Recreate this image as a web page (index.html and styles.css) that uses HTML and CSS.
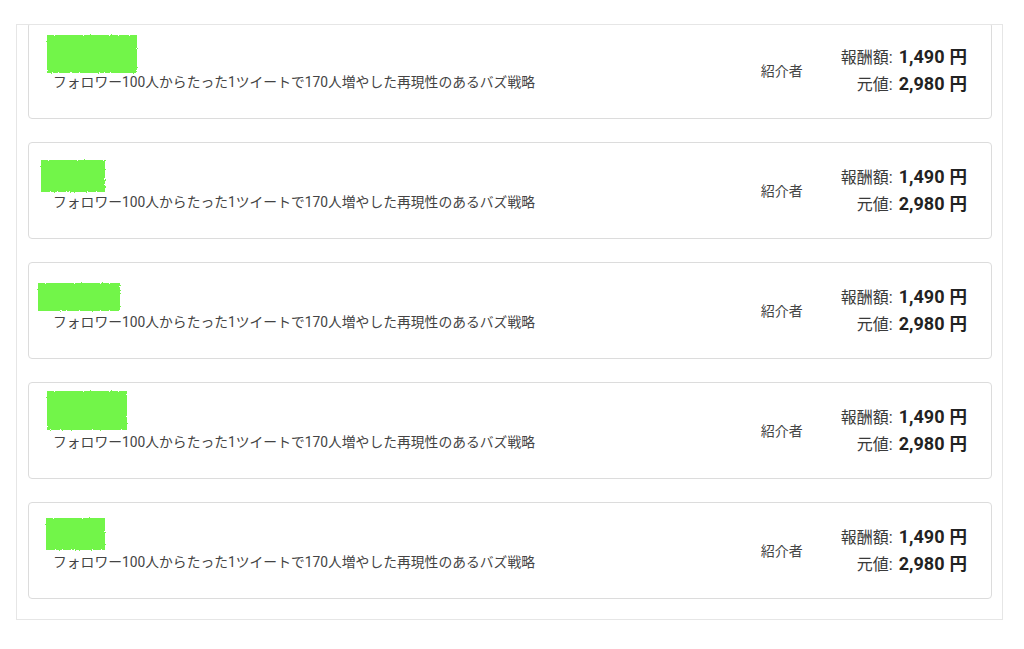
FILE: index.html
```html
<!DOCTYPE html>
<html lang="ja">
<head>
<meta charset="utf-8">
<title>紹介一覧</title>
<link rel="stylesheet" href="styles.css">
</head>
<body>
<svg class="defs" width="0" height="0" aria-hidden="true">
  <filter id="rough" x="-10%" y="-10%" width="120%" height="120%">
    <feTurbulence type="fractalNoise" baseFrequency="0.9" numOctaves="2" seed="3" result="n"/>
    <feDisplacementMap in="SourceGraphic" in2="n" scale="3" xChannelSelector="R" yChannelSelector="G"/>
  </filter>
</svg>
<div class="list">
  <div class="card">
    <span class="blob blob-1"></span>
    <div class="info">
      <div class="name"></div>
      <p class="desc">フォロワー100人からたった1ツイートで170人増やした再現性のあるバズ戦略</p>
    </div>
    <div class="referrer">紹介者</div>
    <div class="prices">
      <div class="row"><span class="label">報酬額:</span> <b class="num">1,490</b> <b class="yen">円</b></div>
      <div class="row"><span class="label">元値:</span> <b class="num">2,980</b> <b class="yen">円</b></div>
    </div>
  </div>
  <div class="card">
    <span class="blob blob-2"></span>
    <div class="info">
      <div class="name"></div>
      <p class="desc">フォロワー100人からたった1ツイートで170人増やした再現性のあるバズ戦略</p>
    </div>
    <div class="referrer">紹介者</div>
    <div class="prices">
      <div class="row"><span class="label">報酬額:</span> <b class="num">1,490</b> <b class="yen">円</b></div>
      <div class="row"><span class="label">元値:</span> <b class="num">2,980</b> <b class="yen">円</b></div>
    </div>
  </div>
  <div class="card">
    <span class="blob blob-3"></span>
    <div class="info">
      <div class="name"></div>
      <p class="desc">フォロワー100人からたった1ツイートで170人増やした再現性のあるバズ戦略</p>
    </div>
    <div class="referrer">紹介者</div>
    <div class="prices">
      <div class="row"><span class="label">報酬額:</span> <b class="num">1,490</b> <b class="yen">円</b></div>
      <div class="row"><span class="label">元値:</span> <b class="num">2,980</b> <b class="yen">円</b></div>
    </div>
  </div>
  <div class="card">
    <span class="blob blob-4"></span>
    <div class="info">
      <div class="name"></div>
      <p class="desc">フォロワー100人からたった1ツイートで170人増やした再現性のあるバズ戦略</p>
    </div>
    <div class="referrer">紹介者</div>
    <div class="prices">
      <div class="row"><span class="label">報酬額:</span> <b class="num">1,490</b> <b class="yen">円</b></div>
      <div class="row"><span class="label">元値:</span> <b class="num">2,980</b> <b class="yen">円</b></div>
    </div>
  </div>
  <div class="card">
    <span class="blob blob-5"></span>
    <div class="info">
      <div class="name"></div>
      <p class="desc">フォロワー100人からたった1ツイートで170人増やした再現性のあるバズ戦略</p>
    </div>
    <div class="referrer">紹介者</div>
    <div class="prices">
      <div class="row"><span class="label">報酬額:</span> <b class="num">1,490</b> <b class="yen">円</b></div>
      <div class="row"><span class="label">元値:</span> <b class="num">2,980</b> <b class="yen">円</b></div>
    </div>
  </div>
</div>
</body>
</html>
```

FILE: styles.css
```css
html, body {
  margin: 0;
  padding: 0;
  background: #ffffff;
}

body {
  font-family: Roboto, "Noto Sans CJK JP", sans-serif;
  color: #333;
}

.defs {
  position: absolute;
  width: 0;
  height: 0;
}

.list {
  margin: 24px 21px 0 16px;
  border: 1px solid #e6e6e6;
  padding: 0 10px 20px 11px;
  overflow: hidden;
  display: flex;
  flex-direction: column;
  gap: 23px;
}

.card {
  position: relative;
  box-sizing: border-box;
  height: 97px;
  border: 1px solid #dcdcdc;
  border-radius: 4px;
  padding: 0 24px;
  display: flex;
  align-items: center;
  background: #fff;
}

.card:first-child {
  margin-top: -3px;
}

.info {
  flex: 1;
  align-self: stretch;
  padding-top: 7px;
  display: flex;
  flex-direction: column;
}

.name {
  height: 42px;
}

.desc {
  margin: 0;
  font-size: 13.8px;
  line-height: 20px;
  color: #444;
  white-space: nowrap;
}

.referrer {
  font-size: 14px;
  color: #444;
  margin-right: 38px;
  line-height: 20px;
}

.prices {
  display: flex;
  flex-direction: column;
  align-items: flex-end;
  margin-top: -1px;
}

.row {
  height: 27px;
  line-height: 27px;
  white-space: nowrap;
  display: flex;
  align-items: baseline;
  gap: 0;
}

.label {
  font-size: 16px;
  color: #3a3a3a;
  margin-right: 6px;
}

.num {
  font-size: 18px;
  font-weight: 700;
  color: #222;
  margin-right: 5px;
}

.yen {
  font-size: 17.5px;
  font-weight: 700;
  color: #222;
}

.blob {
  position: absolute;
  background: #72f54a;
  filter: url(#rough);
}

.blob-1 { left: 18px; top: 12px; width: 90px; height: 38px; }
.blob-2 { left: 12px; top: 17px; width: 64px; height: 32px; }
.blob-3 { left: 9px;  top: 20px; width: 82px; height: 28px; }
.blob-4 { left: 18px; top: 8px;  width: 80px; height: 39px; }
.blob-5 { left: 17px; top: 15px; width: 59px; height: 32px; }
```
